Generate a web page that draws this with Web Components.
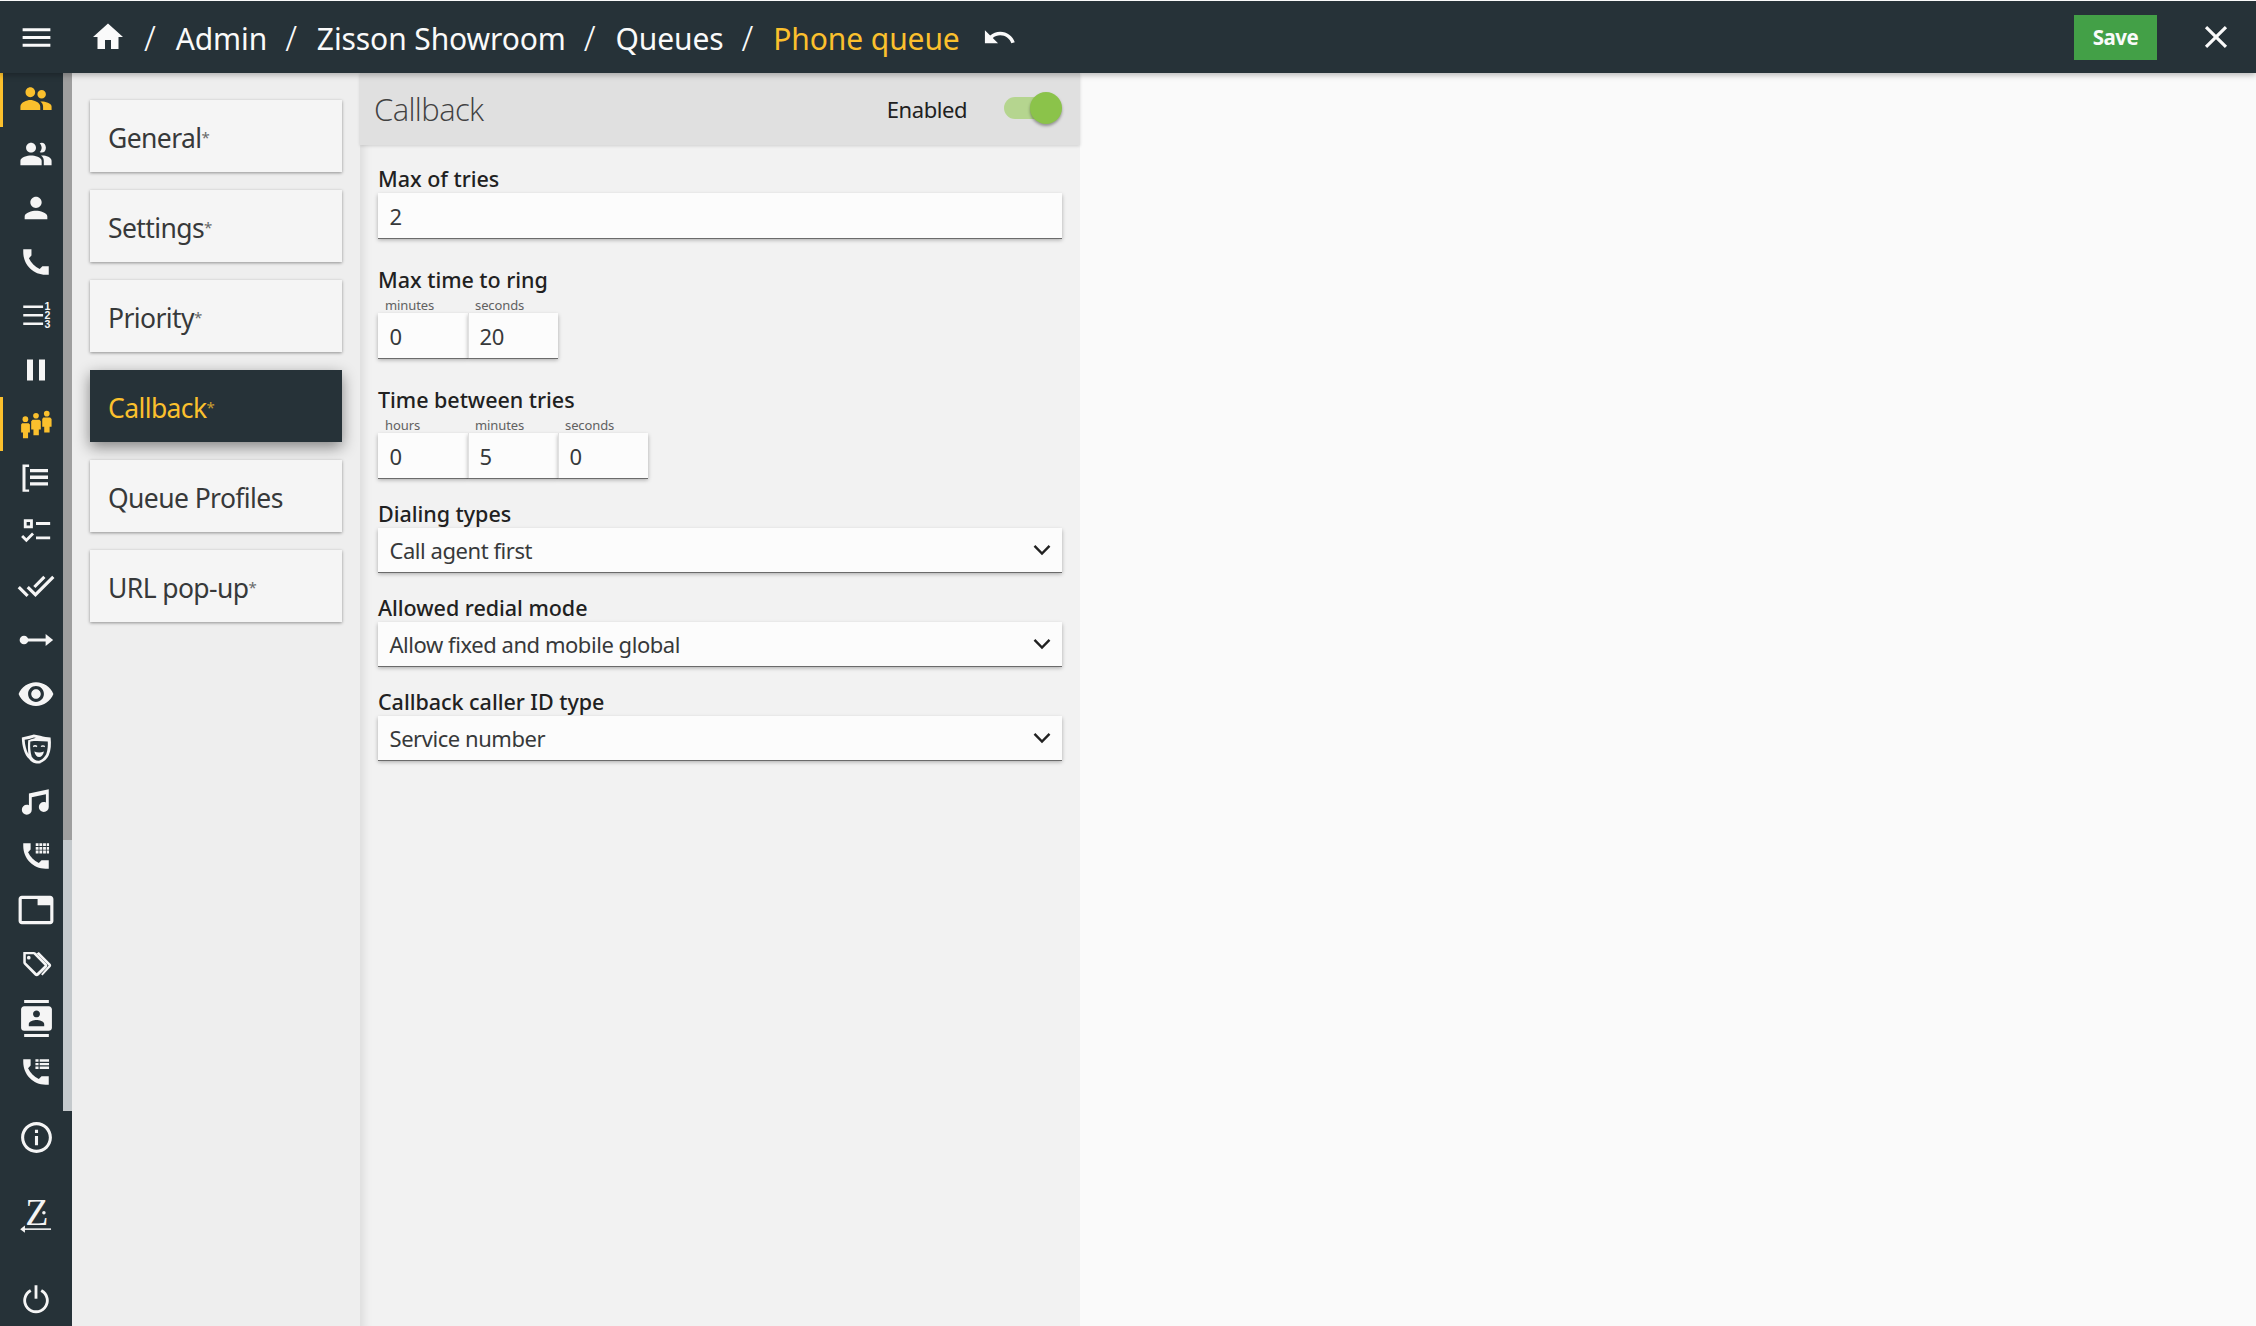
<!DOCTYPE html>
<html lang="en"><head><meta charset="utf-8"><title>Phone queue</title>
<style>
html,body{margin:0;padding:0;height:100%;background:#fafafa;overflow:hidden}
body{font-family:"Noto Sans","Open Sans",sans-serif;color:#212121}
</style></head><body>
<app-shell>
  <top-bar slot="top"></top-bar>
  <side-nav slot="side"></side-nav>
  <tab-list slot="tabs">
    <tab-item star>General</tab-item>
    <tab-item star>Settings</tab-item>
    <tab-item star>Priority</tab-item>
    <tab-item star active>Callback</tab-item>
    <tab-item>Queue Profiles</tab-item>
    <tab-item star>URL pop-up</tab-item>
  </tab-list>
  <form-panel slot="panel" heading="Callback">
    <form-field label="Max of tries" gap="18"><text-box value="2"></text-box></form-field>
    <form-field label="Max time to ring" gap="26"><num-group units="minutes:0,seconds:20"></num-group></form-field>
    <form-field label="Time between tries" gap="26"><num-group units="hours:0,minutes:5,seconds:0"></num-group></form-field>
    <form-field label="Dialing types" gap="20" tight><select-box value="Call agent first"></select-box></form-field>
    <form-field label="Allowed redial mode" gap="20" tight><select-box value="Allow fixed and mobile global"></select-box></form-field>
    <form-field label="Callback caller ID type" gap="20" tight><select-box value="Service number"></select-box></form-field>
  </form-panel>
</app-shell>
<script>
const ICONS={
menu:'<path d="M3 18h18v-2H3v2zm0-5h18v-2H3v2zm0-7v2h18V6H3z"/>',
home:'<path d="M10 20v-6h4v6h5v-8h3L12 3 2 12h3v8z"/>',
undo:'<path d="M12.5 8c-2.65 0-5.05.99-6.9 2.6L2 7v9h9l-3.62-3.62c1.39-1.16 3.16-1.88 5.12-1.88 3.54 0 6.55 2.31 7.6 5.5l2.37-.78C21.08 11.03 17.15 8 12.5 8z"/>',
close:'<path d="M19 6.41L17.59 5 12 10.59 6.41 5 5 6.41 10.59 12 5 17.59 6.41 19 12 13.41 17.59 19 19 17.59 13.41 12z"/>',
group:'<path d="M16 11c1.66 0 2.99-1.34 2.99-3S17.66 5 16 5c-1.66 0-3 1.34-3 3s1.34 3 3 3zm-8-1c1.9 0 3.4-1.6 3.4-3.5S9.9 3 8 3 4.6 4.6 4.6 6.5 6.1 10 8 10zm0 2c-2.33 0-7 1.6-7 4.5V19h14v-2.5c0-2.9-4.67-4.5-7-4.5zm8 1c-.29 0-.62.02-.97.05 1.16.84 1.97 1.97 1.97 3.45V19h6v-2.5c0-2.33-4.67-3.5-7-3.5z"/>',
groupo:'<path d="M16 11c1.66 0 2.99-1.34 2.99-3.5S17.66 4 16 4c-.5 0-1 .13-1.4.37.9 1 1.4 2.2 1.4 3.13 0 1-.5 2.2-1.4 3.13.4.24.9.37 1.4.37zM8.5 11c1.9 0 3.5-1.6 3.5-3.5S10.4 4 8.5 4 5 5.6 5 7.5 6.6 11 8.5 11zm0 2C6 13 1 14.2 1 16.8V20h15v-3.2C16 14.2 11 13 8.5 13zm8 0c-.3 0-.62.02-.97.05 1.16.84 1.97 2 1.97 3.75V20H23v-3.2C23 14.2 19 13 16.5 13z"/>',
person:'<path d="M12 12c2.21 0 4-1.79 4-4s-1.79-4-4-4-4 1.79-4 4 1.79 4 4 4zm0 2c-2.67 0-8 1.34-8 4v2h16v-2c0-2.66-5.33-4-8-4z"/>',
phone:'<path d="M3 3h5.8v4.4L7 9.3c1.5 3.3 4.2 6 7.6 7.6l1.9-1.9H21v6h-2.2C10 21 3 13.8 3 5z"/>',
numbered:'<path d="M3 4.6h14v1.8H3zM3 10.6h14v1.8H3zM3 16.6h14v1.8H3z"/><text x="18" y="7.6" font-family="Liberation Sans" font-weight="700" font-size="7.5">1</text><text x="18" y="14" font-family="Liberation Sans" font-weight="700" font-size="7.5">2</text><text x="18" y="20.5" font-family="Liberation Sans" font-weight="700" font-size="7.5">3</text>',
pause:'<path d="M6 19h4V5H6v14zm8-14v14h4V5h-4z"/>',
agents:'<circle cx="4.5" cy="8.6" r="2"/><circle cx="12" cy="6.2" r="2"/><circle cx="19.6" cy="4.7" r="2"/><path d="M2.2 11.4h4.6l.9 1v5.6H6.4V22H2.8v-4H1.5v-5.6zM9.6 9h4.8l1 1v5.8h-1.4V20h-3.8v-4.2H8.6V10zM17.2 7.4h4.8l1 1V14h-1.4v4h-3.8v-4h-1.4V8.4z"/>',
listb:'<path d="M3 3h4.4v1.6H5v15H7.4V21.2H3zM8 6h12v2.2H8zM8 10.4h12v2.2H8zM8 14.8h12v2.2H8z"/>',
check:'<path fill-rule="evenodd" d="M3.4 3h6.4v6.4H3.4zM5.4 5v2.4h2.4V5zM12 5h10v2H12zM12 15.2h10v2H12z"/><path d="M1.5 15.5l1.4-1.4 2.3 2.3 4-4 1.4 1.4-5.4 5.4z"/>',
done:'<path d="M18 7l-1.41-1.41-6.34 6.34 1.41 1.41L18 7zm4.24-1.41L11.66 16.17 7.48 12l-1.41 1.41L11.66 19l12-12-1.42-1.41zM.41 13.41L6 19l1.41-1.41L1.83 12 .41 13.41z"/>',
arrowdot:'<circle cx="4" cy="12" r="2.9"/><path d="M5 11h15v2H5z"/><path d="M18.4 8l5 4-5 4z"/>',
eye:'<path d="M12 4.5C7 4.5 2.73 7.61 1 12c1.73 4.39 6 7.5 11 7.5s9.27-3.11 11-7.5c-1.73-4.39-6-7.5-11-7.5zM12 17c-2.76 0-5-2.24-5-5s2.24-5 5-5 5 2.24 5 5-2.24 5-5 5zm0-8c-1.66 0-3 1.34-3 3s1.34 3 3 3 3-1.34 3-3-1.34-3-3-3z"/>',
masks:'<path fill-rule="evenodd" d="M2 4.500C5 4 8 3.300 10.500 2.500L15 3.400C17.500 4.200 20 4.400 22.300 4.500 22.800 9 22.600 13.500 21 17.200 19.500 20.500 16 23 13.500 23 11 23 8.500 21.800 7 19.500 4 17 2 10.500 2 4.500ZM4 6.200C4.200 10 5.200 13.800 6.600 16.300 6.300 13 6.200 9.700 6.500 6.500 8 5.900 10 5.300 11.900 4.700L10.500 4.500C8.300 5.300 6.200 5.800 4 6.200ZM8 7.400C7.700 11 8 15 9 18.200 10.300 20.200 12 21 13.500 21 15.300 21 17.800 19 19.200 16.400 20.300 13.300 20.500 10 20.300 7.400 16.200 7.200 12.300 6.700 8 7.400Z"/><path d="M9.800 10.500c1-.8 2.300-.8 3.200.1l-.5.8c-.8-.3-1.600-.3-2.300.1zM15.300 10.600c.9-.8 2.200-.8 3.100 0l-.4.8c-.8-.4-1.500-.4-2.300-.1zM10.800 14.500c2.400.8 4.400.8 6.800 0-.4 2.500-1.800 3.900-3.400 3.900s-2.900-1.400-3.400-3.900z"/>',
music:'<path d="M21,3V15.500A3.500,3.500 0 0,1 17.500,19A3.500,3.500 0 0,1 14,15.500A3.500,3.500 0 0,1 17.500,12C18.040,12 18.550,12.120 19,12.340V6.470L9,8.600V17.500A3.500,3.500 0 0,1 5.500,21A3.500,3.500 0 0,1 2,17.500A3.500,3.500 0 0,1 5.500,14C6.040,14 6.550,14.120 7,14.340V6L21,3Z"/>',
dial:'<path d="M3 3h5.200v4.400L6.400 9.300c1.500 3.300 4.200 6 7.600 7.600l1.900-1.900H21v6h-2.200C10 21 3 13.800 3 5z"/><path d="M11.800 3h2v2h-2zM14.400 3h2v2h-2zM17 3h2v2h-2zM19.600 3h1.600v2h-1.600zM11.800 5.600h2v2h-2zM14.400 5.600h2v2h-2zM17 5.600h2v2h-2zM19.600 5.600h1.600v2h-1.600zM11.800 8.200h2v2h-2zM14.400 8.200h2v2h-2zM17 8.200h2v2h-2zM19.600 8.200h1.600v2h-1.600z"/>',
tab:'<path d="M21 3H3c-1.100 0-2 .9-2 2v14c0 1.100.9 2 2 2h18c1.100 0 2-.9 2-2V5c0-1.100-.9-2-2-2zm0 16H3V5h10v4h8v10z"/>',
tags:'<path fill-rule="evenodd" d="M3.200 3.500h7.300c.5 0 1 .2 1.400.6l7.600 7.800c.7.700.7 1.800 0 2.500l-5.700 5.700c-.7.700-1.900.7-2.600 0L3.600 12.300c-.4-.4-.6-.8-.6-1.300V3.700zM4.800 5.200v5.700l7.700 7.700 5.600-5.500-7.800-7.900zM6.900 6.200a1.300 1.300 0 1 1 0 2.600 1.300 1.300 0 0 1 0-2.600z"/><path d="M14 3.500l8.200 8.300c.7.700.7 1.700 0 2.400l-5.600 6-1-1 5.300-6.200-8.500-8.500z"/>',
contacts:'<path d="M20 0H4v2h16V0zM4 24h16v-2H4v2zM20 4H4c-1.100 0-2 .9-2 2v12c0 1.100.9 2 2 2h16c1.100 0 2-.9 2-2V6c0-1.100-.9-2-2-2zm-8 2.750c1.240 0 2.250 1.010 2.250 2.250s-1.010 2.250-2.250 2.250S9.750 10.240 9.750 9 10.760 6.750 12 6.750zM17 17H7v-1.500c0-1.670 3.330-2.500 5-2.500s5 .83 5 2.500V17z"/>',
phonelist:'<path d="M3 3h5.200v4.400L6.400 9.300c1.500 3.300 4.200 6 7.600 7.600l1.900-1.900H21v6h-2.200C10 21 3 13.800 3 5z"/><path d="M11.600 3h2.200v1.700h-2.200zM14.600 3h6.600v1.700h-6.600zM11.600 5.600h2.200v1.700h-2.200zM14.600 5.600h6.600v1.700h-6.600zM11.600 8.200h2.200v1.700h-2.200zM14.600 8.200h6.600v1.700h-6.600z"/>',
info:'<path d="M11 7h2v2h-2zm0 4h2v6h-2zm1-9C6.480 2 2 6.480 2 12s4.480 10 10 10 10-4.480 10-10S17.520 2 12 2zm0 18c-4.410 0-8-3.590-8-8s3.590-8 8-8 8 3.590 8 8-3.590 8-8 8z"/>',
zlogo:'<text x="5.200" y="17.700" font-family="Liberation Serif" font-size="24">Z</text><circle cx="17" cy="10" r="1.100"/><path d="M3.500 19.800h18v1h-18z"/><path d="M2 20.300L5 18v4.600z"/>',
power:'<path d="M11 3h2v9.500h-2z"/><path d="M7.800 5.800A9 9 0 1 0 16.200 5.800l-1 1.700a7 7 0 1 1-6.400 0z"/>'
};
const svg=(n,s,c='currentColor',extra='')=>`<svg width="${s}" height="${s}" viewBox="0 0 24 24" fill="${c}" style="display:block;${extra}" aria-hidden="true">${ICONS[n]}</svg>`;
class Base extends HTMLElement{
  render(html){const r=this.shadowRoot||this.attachShadow({mode:'open'});r.innerHTML=html;return r}
}
customElements.define('app-shell',class extends Base{connectedCallback(){this.render(`<style>
:host{display:grid;grid-template-columns:72px 288px 720px 1fr;grid-template-rows:73px 1fr;width:2256px;height:1326px;overflow:hidden;background:#fafafa}
.top{grid-column:1/-1;position:relative;z-index:3;box-shadow:0 2px 6px rgba(0,0,0,.28)}
.side{position:relative;z-index:2}
.tabs{position:relative;z-index:1;min-height:0}
.panel{position:relative;z-index:1;min-height:0}
.rest{background:#fafafa}
</style><div class="top"><slot name="top"></slot></div><div class="side"><slot name="side"></slot></div><div class="tabs"><slot name="tabs"></slot></div><div class="panel"><slot name="panel"></slot></div><div class="rest"></div>`)}});
customElements.define('top-bar',class extends Base{connectedCallback(){
 const sep='<span class="s">/</span>';
 this.render(`<style>
:host{display:flex;align-items:center;height:72px;margin-top:1px;background:#263238;color:#fafafa;box-sizing:border-box}
.m{width:72px;display:flex;justify-content:center;flex:none}
.h{margin-left:18px;margin-right:0;flex:none}
.crumbs{display:flex;align-items:center;font-size:30px;font-weight:400;letter-spacing:-.1px;margin-left:18px;white-space:nowrap;position:relative;top:1px}
.s{margin:0 20px 0 18px;font-size:34px;font-weight:300}
.s:first-child{margin-left:0}
.cur{color:#fbc02d}
.u{margin-left:22px;flex:none}
.sp{flex:1}
button{all:unset;box-sizing:border-box;width:83px;height:45px;background:#43a047;color:#fafafa;font:700 20.500px "Noto Sans",sans-serif;letter-spacing:-.5px;display:flex;align-items:center;justify-content:center}
.x{margin:0 21px 0 40px;flex:none}
</style><div class="m">${svg('menu',37)}</div><div class="h">${svg('home',36)}</div>
<div class="crumbs">${sep}<span>Admin</span>${sep}<span>Zisson Showroom</span>${sep}<span>Queues</span>${sep}<span class="cur">Phone queue</span></div>
<div class="u">${svg('undo',35)}</div><div class="sp"></div><button>Save</button><div class="x">${svg('close',38)}</div>`)}});
customElements.define('nav-icon',class extends Base{connectedCallback(){
 const a=this.hasAttribute('active');
 this.render(`<style>
:host{display:flex;align-items:center;justify-content:center;box-sizing:border-box;height:${this.getAttribute('h')||54}px;width:63px;padding-left:9px;position:relative;color:${a?'#fbc02d':'#f5f5f5'}}
:host([wide]){width:72px;padding-left:0}
i{position:absolute;left:0;top:0;bottom:0;width:3px;background:#fbc02d;display:${a?'block':'none'}}
</style><i></i>${svg(this.getAttribute('name'),this.getAttribute('size')||36)}`)}});
customElements.define('side-nav',class extends Base{connectedCallback(){
 const top=[['group',34,1],['groupo',34],['person',34],['phone',34],['numbered',34],['pause',36],['agents',34,1],['listb',36],['check',34],['done',38],['arrowdot',36],['eye',38],['masks',34],['music',34],['dial',34],['tab',38],['tags',34],['contacts',37],['phonelist',34]];
 this.render(`<style>
:host{display:flex;flex-direction:column;height:100%;background:#263238}
.scroll{height:1038px;display:flex;background:linear-gradient(#9e9e9e 0 767px,#c4c9cc 767px);flex:none}
.list{width:63px;background:#263238;flex:none}
.bottom{flex:1;display:flex;flex-direction:column}
</style><div class="scroll"><div class="list">${top.map(t=>`<nav-icon name="${t[0]}" size="${t[1]}" ${t[2]?'active':''}></nav-icon>`).join('')}</div></div>
<div class="bottom"><nav-icon wide name="info" size="37" h="52" style="margin-top:0"></nav-icon><nav-icon wide name="zlogo" size="38" h="106"></nav-icon><nav-icon wide name="power" size="34" h="58"></nav-icon></div>`)}});
customElements.define('tab-list',class extends Base{connectedCallback(){this.render(`<style>
:host{display:flex;flex-direction:column;gap:18px;height:100%;box-sizing:border-box;padding:27px 18px 0;background:#eee}
</style><slot></slot>`)}});
customElements.define('tab-item',class extends Base{connectedCallback(){
 this.render(`<style>
:host{display:flex;align-items:center;height:72px;box-sizing:border-box;padding:3px 0 0 18px;background:#f5f5f5;color:#37393a;font-size:26.500px;letter-spacing:-.6px;box-shadow:0 1px 3px rgba(0,0,0,.4);white-space:nowrap}
:host([active]){background:#263238;color:#fbc02d;box-shadow:0 5px 14px rgba(0,0,0,.45)}
small{font-size:15px;color:inherit;opacity:.75;letter-spacing:0;position:relative;top:-1px}
</style><slot></slot>${this.hasAttribute('star')?'<small>*</small>':''}`)}});
customElements.define('form-panel',class extends Base{connectedCallback(){this.render(`<style>
:host{display:flex;flex-direction:column;height:100%;background:#f2f2f2;box-shadow:inset 12px 0 10px -8px rgba(0,0,0,.09)}
header{height:72px;flex:none;box-sizing:border-box;background:#e0e0e0;display:flex;align-items:center;padding:0 18px 0 14px;box-shadow:0 1px 3px rgba(0,0,0,.15);position:relative}
h2{font-family:"Open Sans","Noto Sans",sans-serif;font-weight:300;font-size:31px;letter-spacing:-.6px;margin:0;color:#424242;flex:1}
span{font-size:22px;letter-spacing:-.45px;color:#212121;margin-right:37px}
.body{padding:0 18px}
</style><header><h2>${this.getAttribute('heading')}</h2><span>Enabled</span><toggle-switch></toggle-switch></header><div class="body"><slot></slot></div>`)}});
customElements.define('toggle-switch',class extends Base{connectedCallback(){this.render(`<style>
:host{display:block;width:58px;height:32px;position:relative;flex:none;top:-1px}
.t{position:absolute;left:0;right:2px;top:5px;height:22px;border-radius:11px;background:#b5d58f}
.k{position:absolute;right:0;top:0;width:32px;height:32px;border-radius:50%;background:#8bc34a;box-shadow:0 2px 3px rgba(0,0,0,.35)}
</style><div class="t"></div><div class="k"></div>`)}});
customElements.define('form-field',class extends Base{connectedCallback(){this.render(`<style>
:host{display:block;margin-top:${this.getAttribute('gap')}px}
label{display:block;font-size:21.500px;line-height:${this.hasAttribute('tight')?30:30}px;letter-spacing:-.03px;font-weight:500;color:#212121;white-space:nowrap;position:relative;top:1px}
</style><label>${this.getAttribute('label')}</label><slot></slot>`)}});
const boxCss=`.b{background:#fcfcfc;height:45px;box-sizing:border-box;box-shadow:0 1px 0 #6b6b6b,0 2px 4px rgba(0,0,0,.3);display:flex;align-items:center;color:#37393a;font-size:22px;letter-spacing:-.45px;padding:0 11.500px}`;
customElements.define('text-box',class extends Base{connectedCallback(){this.render(`<style>:host{display:block}${boxCss}</style><div class="b">${this.getAttribute('value')}</div>`)}});
customElements.define('select-box',class extends Base{connectedCallback(){this.render(`<style>:host{display:block}${boxCss}
.b{height:44px;justify-content:space-between;padding-right:11px}
svg{display:block}</style><div class="b"><span>${this.getAttribute('value')}</span><svg width="18" height="12" viewBox="0 0 18 12"><path d="M1.500 1.800L9 9.500l7.500-7.700" fill="none" stroke="#212121" stroke-width="2.400"/></svg></div>`)}});
customElements.define('num-group',class extends Base{connectedCallback(){
 const u=this.getAttribute('units').split(',').map(x=>x.split(':'));
 this.render(`<style>:host{display:flex;width:max-content;flex-wrap:nowrap}${boxCss}
.c{width:90px}
.l{display:block;height:16px;line-height:16px;margin-top:3px;padding-left:7px;font-size:13px;letter-spacing:-.1px;color:#616161}
.c+.c .b{border-left:1px solid #e0e0e0;padding-left:10.500px}
</style>${u.map(x=>`<div class="c"><span class="l">${x[0]}</span><div class="b">${x[1]}</div></div>`).join('')}`)}});
</script>
</body></html>
